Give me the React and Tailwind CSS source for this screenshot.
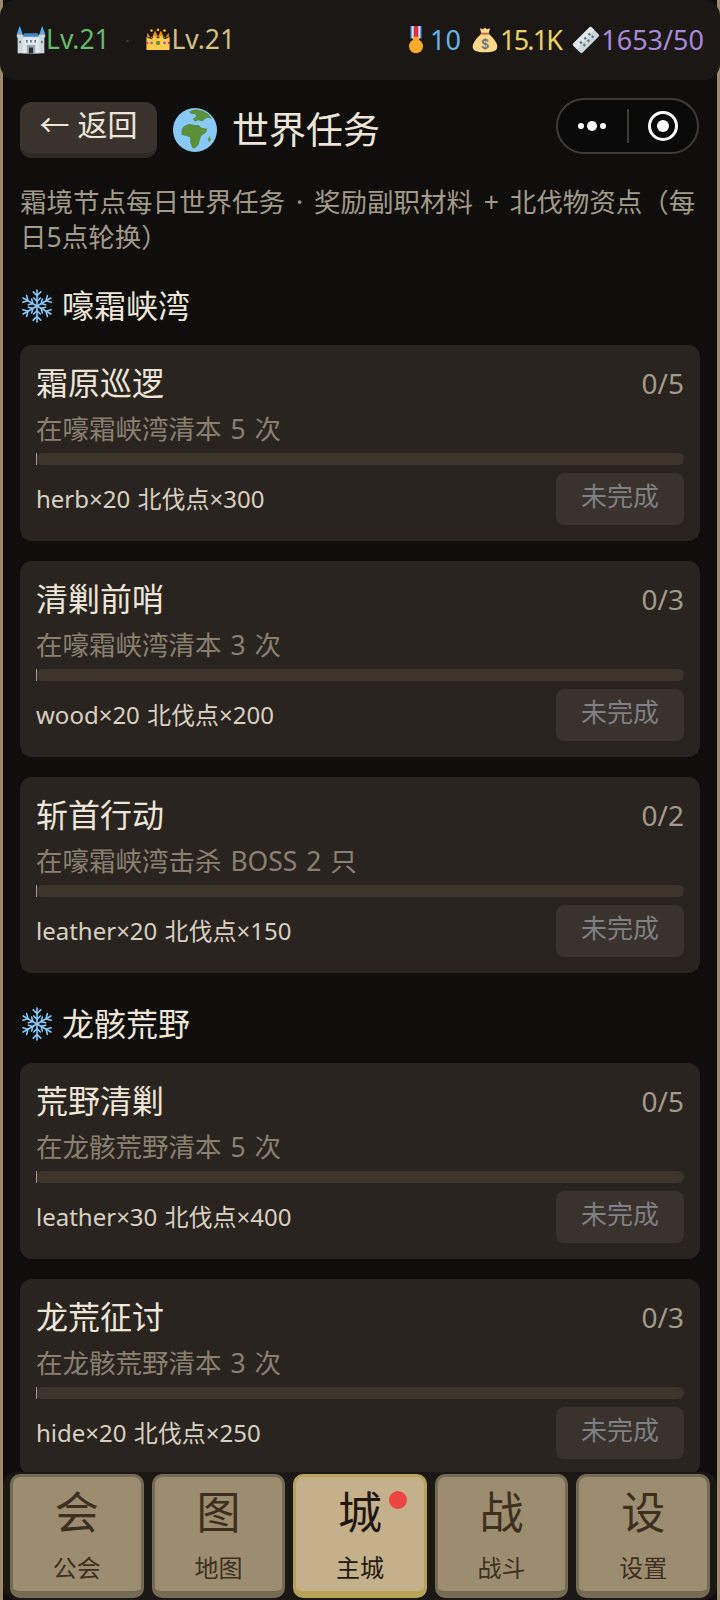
import React from "react"

const cjk = { fontFamily: '"Noto Sans", "Noto Sans CJK SC", sans-serif' }

function CastleIcon() {
  return (
    <svg width="30" height="30" viewBox="0 0 36 36" className="shrink-0">
      <path fill="#ccd6dd" d="M2 12h32v22H2z" />
      <path fill="#e1e8ed" d="M8 14h20v20H8z" />
      <path fill="#3b88c3" d="M8 14l2-4h16l2 4z" />
      <path fill="#55acee" d="M1 11 4.500 1 8 11zM28 11l3.500-10L35 11z" />
      <path fill="#ccd6dd" d="M1 11h7v4H1zM28 11h7v4h-7z" />
      <path fill="#99aab5" d="M13 24h10v10H13z" />
      <path fill="#292f33" d="M15.500 27h5v7h-5z" />
      <path fill="#66757f" d="M12 18h2v3h-2zM22 18h2v3h-2zM17 18h2v3h-2zM4 19h2v3H4zM30 19h2v3h-2z" />
    </svg>
  )
}

function CrownIcon() {
  return (
    <svg width="26" height="26" viewBox="0 0 36 36" className="shrink-0">
      <path fill="#f4900c" d="M3 8l6 8 5-11 4 9 4-9 5 11 6-8v6H3z" />
      <path fill="#ffcc4d" d="M2 14l7 3 4-5 5 4 5-4 4 5 7-3v18H2z" />
      <circle cx="18" cy="22" r="3" fill="#5c913b" />
      <circle cx="9" cy="22" r="2" fill="#9266cc" />
      <circle cx="27" cy="22" r="2" fill="#9266cc" />
      <circle cx="3" cy="22" r="1.500" fill="#dd2e44" />
      <circle cx="33" cy="22" r="1.500" fill="#dd2e44" />
      <circle cx="9" cy="5" r="1.800" fill="#ffac33" />
      <circle cx="18" cy="4" r="1.800" fill="#ffac33" />
      <circle cx="27" cy="5" r="1.800" fill="#ffac33" />
    </svg>
  )
}

function MedalIcon() {
  return (
    <svg width="28" height="28" viewBox="0 0 36 36" className="shrink-0">
      <path fill="#55acee" d="M11 0h14v16H11z" />
      <path fill="#e1e8ed" d="M13 0h10v16H13z" />
      <path fill="#dd2e44" d="M15 0h6v16h-6z" />
      <path fill="#ffac33" d="M14 14h8v6h-8z" />
      <circle cx="18" cy="26" r="9" fill="#f9a825" />
      <circle cx="18" cy="26" r="6" fill="#ffac33" />
    </svg>
  )
}

function BagIcon() {
  return (
    <svg width="26" height="26" viewBox="0 0 36 36" className="mr-[2px] shrink-0">
      <path fill="#fdd888" d="M13 9C8 14 1 21 1 27c0 6 5 8 17 8s17-2 17-8c0-6-7-13-12-18z" />
      <path fill="#fdd888" d="M11 2c2 0 3 1 4 1s2-2 3-2 2 2 3 2 2-1 4-1l-2 7H13z" />
      <path fill="#bf6952" d="M12 8h12v2.500H12z" />
      <text x="18" y="30" fontSize="19" fontWeight="700" textAnchor="middle" fill="#67757f" fontFamily="Liberation Sans">$</text>
    </svg>
  )
}

function TicketIcon() {
  return (
    <svg width="30" height="30" viewBox="0 0 36 36" className="shrink-0">
      <path fill="#ccd6dd" d="M22 3a2 2 0 0 1 3 0l8 8a2 2 0 0 1 0 3L14 33a2 2 0 0 1-3 0l-8-8a2 2 0 0 1 0-3z" />
      <path fill="#e1e8ed" d="M22 3a2 2 0 0 1 3 0l3 3L7 29l-4-4a2 2 0 0 1 0-3z" />
      <path fill="#66757f" d="M22 9l2 2-2 2-2-2zM26 12l2 2-2 2-2-2zM17 14l2 2-2 2-2-2zM21 17l2 2-2 2-2-2zM12 19l2 2-2 2-2-2zM16 22l2 2-2 2-2-2z" />
    </svg>
  )
}

function GlobeIcon() {
  return (
    <svg width="44" height="44" viewBox="0 0 36 36" className="shrink-0">
      <circle cx="18" cy="18" r="18" fill="#88c9f9" />
      <path fill="#5c913b" d="M13 3l5-2 6 1 5 3 3 4-3-1-3 1-2 2-3-1-3 1-2-2 3-2-1-2-3 0z" />
      <path fill="#5c913b" d="M7 18c1-3 4-5 7-5l4 1 3 0 2 2 5 1-1 3-4 3-1 3-1 4-3 3-2 0-2-5 0-4-3-1-4-1z" />
      <path fill="#5c913b" d="M30 23l1 3-1.500 2-1-2z" />
    </svg>
  )
}

function SnowIcon() {
  const arm = (
    <g>
      <path d="M18 18V1" />
      <path d="M14 3l4 4 4-4" />
      <path d="M14.500 9.500 18 13l3.500-3.500" />
    </g>
  )
  return (
    <svg width="34" height="34" viewBox="0 0 36 36" fill="none" stroke="#88c9f9" strokeWidth="1.700" strokeLinecap="round" className="shrink-0">
      {[0, 60, 120, 180, 240, 300].map((a) => (
        <g key={a} transform={`rotate(${a} 18 18)`}>{arm}</g>
      ))}
    </svg>
  )
}

const zones = [
  {
    name: "嚎霜峡湾",
    quests: [
      { title: "霜原巡逻", desc: "在嚎霜峡湾清本 5 次", reward: "herb×20 北伐点×300", count: "0/5" },
      { title: "清剿前哨", desc: "在嚎霜峡湾清本 3 次", reward: "wood×20 北伐点×200", count: "0/3" },
      { title: "斩首行动", desc: "在嚎霜峡湾击杀 BOSS 2 只", reward: "leather×20 北伐点×150", count: "0/2" },
    ],
  },
  {
    name: "龙骸荒野",
    quests: [
      { title: "荒野清剿", desc: "在龙骸荒野清本 5 次", reward: "leather×30 北伐点×400", count: "0/5" },
      { title: "龙荒征讨", desc: "在龙骸荒野清本 3 次", reward: "hide×20 北伐点×250", count: "0/3" },
    ],
  },
]

const tabs = [
  { icon: "会", label: "公会" },
  { icon: "图", label: "地图" },
  { icon: "城", label: "主城", active: true },
  { icon: "战", label: "战斗" },
  { icon: "设", label: "设置" },
]

function QuestCard({ quest }) {
  return (
    <div className="rounded-xl bg-[#2a2420] px-4 pt-4 pb-4">
      <div className="flex items-center justify-between">
        <span className="text-[32px] leading-[44px] text-[#ede6d8]">{quest.title}</span>
        <span className="text-[28px] leading-[44px] text-[#a39a8a]">{quest.count}</span>
      </div>
      <div className="mt-[6px] text-[26.500px] leading-[36px] [word-spacing:2px] text-[#8a8070]">{quest.desc}</div>
      <div className="mt-[6px] h-3 rounded-full bg-[#3d342c]">
        <div className="h-full w-[1px] bg-[#a39a8a]" />
      </div>
      <div className="mt-2 flex items-center justify-between">
        <span className="text-[24px] [word-spacing:1px] text-[#d8d0c0]">{quest.reward}</span>
        <span className="flex h-[52px] w-[128px] items-center justify-center rounded-lg bg-[#3a322c] pb-[6px] text-[26px] text-[#7f8085]">未完成</span>
      </div>
    </div>
  )
}

export default function App() {
  return (
    <div className="relative h-[1600px] w-[720px] overflow-hidden bg-[#9c8a6a]" style={cjk}>
      <div className="mx-[3px] h-full bg-[#0f0e0d]">
        <div className="-mx-[3px] flex h-[80px] items-center justify-between rounded-[16px] bg-[#1a1714] pr-4 pl-4 text-[27px]">
          <div className="flex items-center">
            <CastleIcon />
            <span className="text-[26.500px] text-[#66bb6a]">Lv.21</span>
            <span className="mx-[16px] text-[14px] text-[#554e44]">·</span>
            <CrownIcon />
            <span className="text-[26.500px] text-[#d4c080]">Lv.21</span>
          </div>
          <div className="flex items-center">
            <MedalIcon />
            <span className="mr-[11px] text-[#64b5e6]">10</span>
            <BagIcon />
            <span className="mr-[10px] tracking-[-1.800px] text-[#ecd060]">15.1K</span>
            <TicketIcon />
            <span className="text-[#a98ad8]">1653/50</span>
          </div>
        </div>

        <div className="px-[17px]">
          <div className="mt-[22px] flex items-center">
            <button className="h-[56px] w-[137px] rounded-[12px] border-b-[5px] border-[#2f2925] bg-[#3a332d] pb-[6px] text-[30px] leading-[40px] text-[#ede6d8]">← 返回</button>
            <span className="ml-[16px]"><GlobeIcon /></span>
            <h1 className="ml-[15px] text-[37px] text-[#ede6d8]">世界任务</h1>
            <div className="mr-[1px] ml-auto flex h-[56px] w-[143px] -translate-y-1 items-center rounded-full border-2 border-[#3f3c38] bg-[#0a0a0a]">
              <div className="flex flex-1 items-center justify-center gap-[3px]">
                <span className="size-[6px] rounded-full bg-white" />
                <span className="size-[10px] rounded-full bg-white" />
                <span className="size-[6px] rounded-full bg-white" />
              </div>
              <div className="h-[34px] w-[2px] bg-[#3f3c38]" />
              <div className="flex flex-1 items-center justify-center">
                <span className="flex size-[30px] items-center justify-center rounded-full border-[3px] border-white">
                  <span className="size-[12px] rounded-full bg-white" />
                </span>
              </div>
            </div>
          </div>

          <p className="mt-[27px] text-[26.500px] leading-[35px] [word-spacing:4px] text-[#a39a8a]">霜境节点每日世界任务 · 奖励副职材料 + 北伐物资点（每日5点轮换）</p>

          {zones.map((zone) => (
            <div key={zone.name}>
              <div className="mt-[29px] mb-[17px] flex items-center gap-[8px] text-[32px] leading-[44px] text-[#ede6d8]">
                <SnowIcon />
                {zone.name}
              </div>
              <div className="flex flex-col gap-5">
                {zone.quests.map((quest) => (
                  <QuestCard key={quest.title} quest={quest} />
                ))}
              </div>
            </div>
          ))}
        </div>
      </div>

      <div className="absolute inset-x-[3px] bottom-0 flex h-[128px] gap-2 rounded-[14px] bg-[#1a1714] px-[7px] pt-[2px] pb-[2px]">
        {tabs.map((tab) => (
          <div
            key={tab.label}
            className={
              tab.active
                ? "relative flex flex-1 flex-col items-center rounded-[10px] border-x-[3px] border-t-[3px] border-b-[7px] border-[#b8a25a] bg-[#c4b08a] text-[#1f1810]"
                : "relative flex flex-1 flex-col items-center rounded-[10px] border-x-[3px] border-t-[3px] border-b-[7px] border-[#756a54] bg-[#9c8c70] text-[#3d3020]"
            }
          >
            <span className="mt-[2px] text-[44px] leading-[66px]">{tab.icon}</span>
            <span className="mt-[6px] text-[24px] leading-[34px]">{tab.label}</span>
            {tab.active && <span className="absolute top-[14px] right-[17px] size-[18px] rounded-full bg-[#ef4444]" />}
          </div>
        ))}
      </div>
    </div>
  )
}
